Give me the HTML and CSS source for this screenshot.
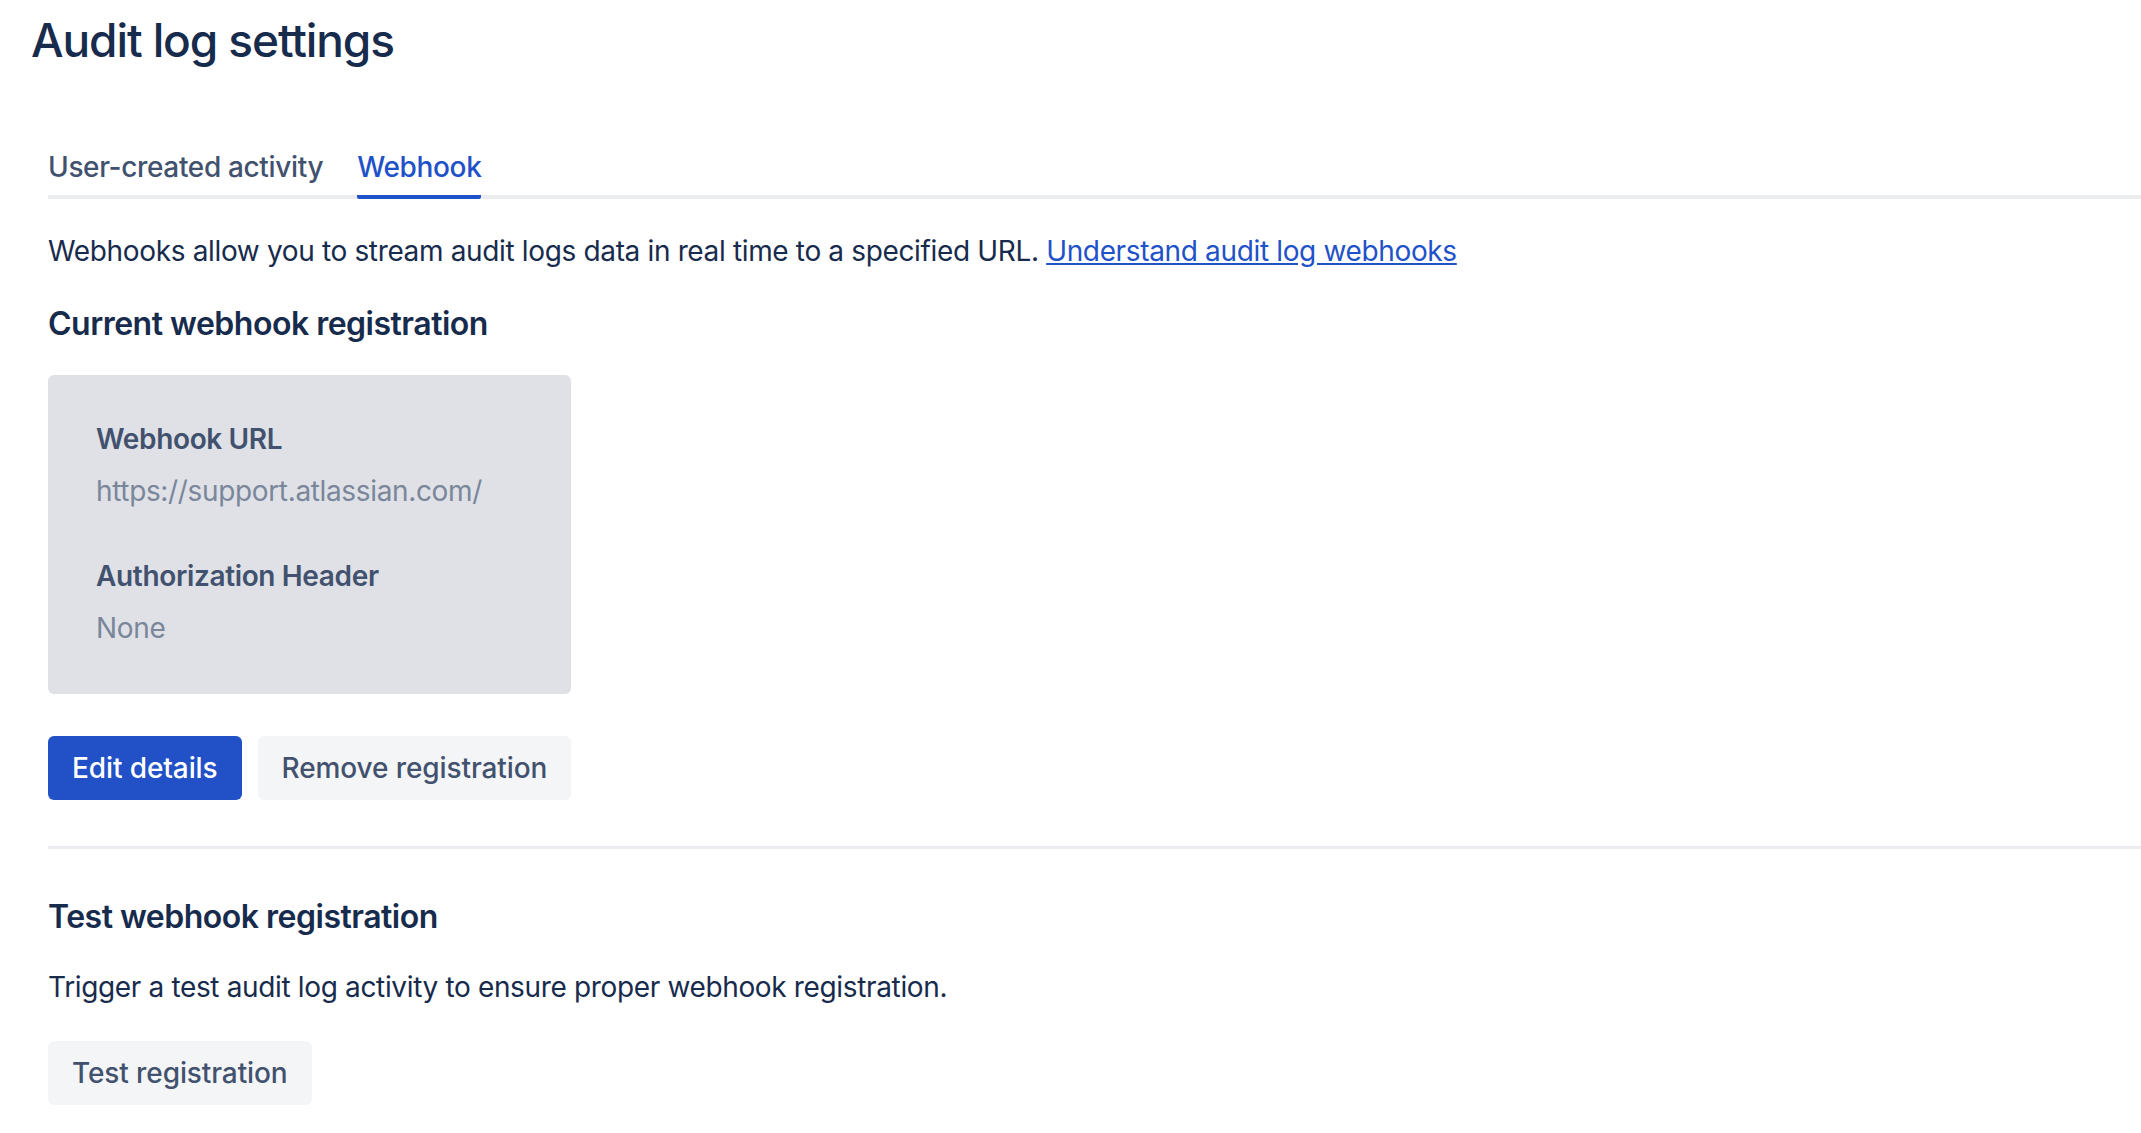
FILE: index.html
```html
<!DOCTYPE html>
<html lang="en">
<head>
  <meta charset="UTF-8" />
  <meta name="viewport" content="width=device-width, initial-scale=1.0" />
  <title>Audit log settings</title>
  <link rel="stylesheet" href="styles.css">
</head>
<body>
  <div class="page">
    <h1 class="page-title">Audit log settings</h1>

    <div class="content">
      <nav class="tabs">
        <a class="tab" href="#">User-created activity</a>
        <a class="tab active" href="#">Webhook</a>
      </nav>

      <p class="intro">Webhooks allow you to stream audit logs data in real time to a specified URL. <a href="#">Understand audit log webhooks</a></p>

      <h2 class="section-title">Current webhook registration</h2>

      <div class="registration">
        <div class="card">
          <div class="field">
            <div class="field-label">Webhook URL</div>
            <div class="field-value">https://support.atlassian.com/</div>
          </div>
          <div class="field">
            <div class="field-label">Authorization Header</div>
            <div class="field-value">None</div>
          </div>
        </div>

        <div class="actions">
          <button class="btn btn-primary">Edit details</button>
          <button class="btn">Remove registration</button>
        </div>
      </div>

      <hr class="divider">

      <h2 class="section-title test-title">Test webhook registration</h2>
      <p class="test-text">Trigger a test audit log activity to ensure proper webhook registration.</p>
      <button class="btn test-btn">Test registration</button>
    </div>
  </div>
</body>
</html>
```

FILE: styles.css
```css
* {
  margin: 0;
  padding: 0;
  box-sizing: border-box;
}

body {
  font-family: Inter, 'Noto Sans', sans-serif;
  color: #172b4d;
  background: #ffffff;
  font-size: 28px;
  line-height: 40px;
  letter-spacing: -0.35px;
}

.page {
  padding: 12px 0 0 31px;
}

.page-title {
  font-size: 46px;
  line-height: 56px;
  font-weight: 500;
  letter-spacing: -1.1px;
  color: #172b4d;
}

.content {
  margin-left: 17px;
}

.tabs {
  margin-top: 79px;
  display: flex;
  gap: 34px;
  border-bottom: 4px solid #ebecf0;
}

.tab {
  color: #42526e;
  text-decoration: none;
  font-weight: 500;
  padding-bottom: 8px;
  margin-bottom: -4px;
  border-bottom: 4px solid transparent;
  border-radius: 2px;
}

.tab.active {
  color: #1f52c8;
  border-bottom-color: #1f52c8;
}

.intro {
  margin-top: 32px;
}

.intro a {
  color: #1f52c8;
}

.section-title {
  margin-top: 33px;
  font-size: 32px;
  line-height: 40px;
  font-weight: 600;
  letter-spacing: -0.5px;
  color: #172b4d;
}

.registration {
  margin-top: 31px;
  display: inline-flex;
  flex-direction: column;
}

.card {
  background: #dfe1e6;
  border-radius: 6px;
  padding: 44px 48px 46px;
}

.field + .field {
  margin-top: 45px;
}

.field-label {
  font-weight: 600;
  color: #42526e;
}

.field-value {
  margin-top: 12px;
  color: #7a869a;
}

.actions {
  margin-top: 42px;
  display: flex;
  gap: 16px;
}

.btn {
  font-family: inherit;
  font-size: 28px;
  font-weight: 500;
  letter-spacing: -0.1px;
  height: 64px;
  padding: 0 24px;
  border: none;
  border-radius: 6px;
  background: #f4f5f7;
  color: #42526e;
  cursor: pointer;
}

.btn-primary {
  background: #2250c7;
  color: #ffffff;
}

.divider {
  margin-top: 46px;
  border: none;
  height: 3px;
  background: #ebecf0;
}

.test-title {
  margin-top: 48px;
}

.test-text {
  margin-top: 30px;
}

.test-btn {
  margin-top: 34px;
}
```
